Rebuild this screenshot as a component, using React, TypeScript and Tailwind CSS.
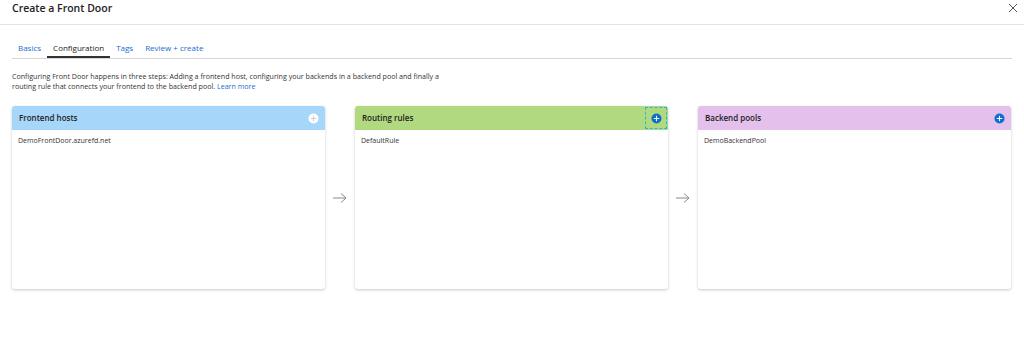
import React from 'react'

const font = { fontFamily: '"Open Sans", "Noto Sans", sans-serif' }

interface Panel {
  title: string
  item: string
  header: string
  focused?: boolean
  light?: boolean
}

const panels: Panel[] = [
  { title: 'Frontend hosts', item: 'DemoFrontDoor.azurefd.net', header: 'bg-[#a7d6fb]', light: true },
  { title: 'Routing rules', item: 'DefaultRule', header: 'bg-[#b1d97f]', focused: true },
  { title: 'Backend pools', item: 'DemoBackendPool', header: 'bg-[#e3c1ec]' },
]

function AddIcon({ light }: { light?: boolean }) {
  return (
    <svg width="11" height="11" viewBox="0 0 11 11">
      <circle cx="5.5" cy="5.5" r="5" fill={light ? '#ffffff' : '#0b6fcc'} />
      <path d="M5.5 2.8v5.4M2.8 5.5h5.4" stroke={light ? '#c9ccd0' : '#ffffff'} strokeWidth="1.1" />
    </svg>
  )
}

function Arrow() {
  return (
    <div className="w-[30px] flex items-center justify-center">
      <svg width="16" height="12" viewBox="0 0 16 12">
        <path d="M1 6h13M9 1.5 14 6l-5 4.5" fill="none" stroke="#8a8a8a" strokeWidth="1" />
      </svg>
    </div>
  )
}

function PanelCard({ panel }: { panel: Panel }) {
  return (
    <div className="w-[313px] h-[183px] bg-white rounded-[3px] overflow-hidden shadow-[0_1px_3px_rgba(0,0,0,0.22)]">
      <div className={`h-[24px] flex items-center justify-between pl-[7px] pr-[1px] ${panel.header}`}>
        <span className="text-[8px] font-semibold text-[#222]">{panel.title}</span>
        <div
          className={`w-[22px] h-[22px] flex items-center justify-center ${
            panel.focused ? 'border border-dashed border-[#2cb6d8]' : ''
          }`}
        >
          <AddIcon light={panel.light} />
        </div>
      </div>
      <div className="pl-[6px] pt-[6px] text-[7px] text-[#333]">{panel.item}</div>
    </div>
  )
}

export default function App() {
  return (
    <div className="w-[1024px] h-[352px] bg-white overflow-hidden text-[#222]" style={font}>
      <div className="h-[25px] flex items-center justify-between pl-[12px] pr-[6px] border-b border-[#e4e4e4]">
        <h1 className="text-[10.5px] font-semibold text-[#222] -mt-[7px]">Create a Front Door</h1>
        <svg width="10" height="10" viewBox="0 0 10 10" className="-mt-[9px]">
          <path d="M1 1l8 8M9 1l-8 8" stroke="#555" strokeWidth="1" />
        </svg>
      </div>

      <div className="mx-[12px] mt-[17px] flex items-end border-b border-[#d6d6d6] h-[17px] text-[8px]">
        <span className="px-[6px] pb-[4px] text-[#1a6dd0]">Basics</span>
        <span className="px-[6px] pb-[2px] text-[#222] border-b-2 border-[#333]">Configuration</span>
        <span className="px-[6px] pb-[4px] text-[#1a6dd0]">Tags</span>
        <span className="px-[6px] pb-[4px] text-[#1a6dd0]">Review + create</span>
      </div>

      <div className="ml-[12px] mt-[12px] text-[7.1px] leading-[10px] text-[#333] whitespace-nowrap">
        <div>
          Configuring Front Door happens in three steps: Adding a frontend host, configuring your backends in a backend pool and finally a
        </div>
        <div>
          routing rule that connects your frontend to the backend pool. <span className="text-[#1a6dd0]">Learn more</span>
        </div>
      </div>

      <div className="ml-[12px] mt-[15px] flex items-stretch">
        <PanelCard panel={panels[0]} />
        <Arrow />
        <PanelCard panel={panels[1]} />
        <Arrow />
        <PanelCard panel={panels[2]} />
      </div>
    </div>
  )
}
